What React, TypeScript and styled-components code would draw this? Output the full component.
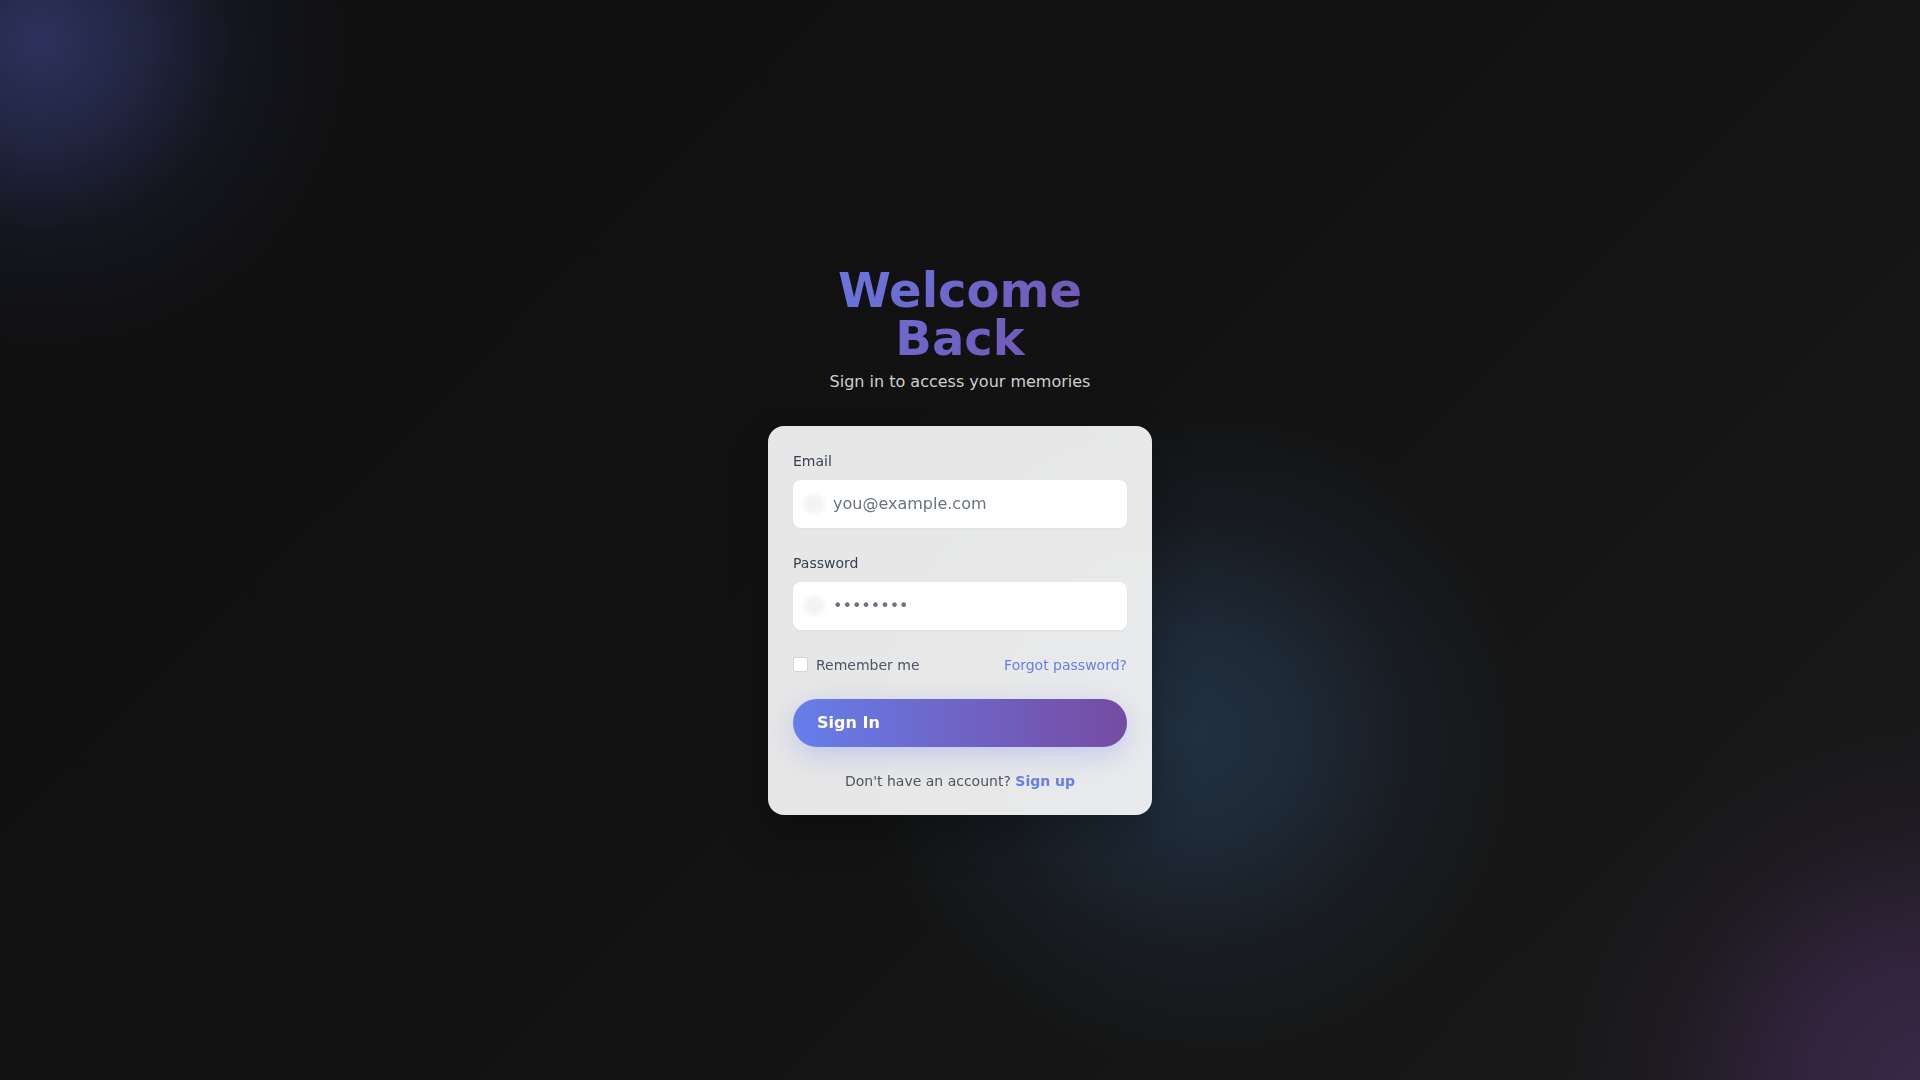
import React from 'react'
import styled, { createGlobalStyle } from 'styled-components'

const GlobalStyle = createGlobalStyle`
    * {
        box-sizing: border-box;
    }
    body {
        margin: 0;
        background: #111111;
        font-family: "DejaVu Sans", Verdana, sans-serif;
    }
`

const Page = styled.div`
    min-height: 100vh;
    display: flex;
    align-items: center;
    justify-content: center;
    background:
        radial-gradient(circle 320px at 40px 40px, rgba(44, 50, 92, 1) 0%, rgba(40, 46, 84, 0.75) 30%, rgba(30, 34, 60, 0.35) 60%, rgba(17, 17, 17, 0) 100%),
        radial-gradient(circle 330px at 1195px 735px, rgba(33, 47, 63, 1) 0%, rgba(32, 46, 62, 0.85) 30%, rgba(28, 38, 50, 0.45) 65%, rgba(17, 17, 17, 0) 100%),
        radial-gradient(circle 380px at 1930px 1090px, rgba(58, 40, 72, 1) 0%, rgba(54, 38, 68, 0.8) 35%, rgba(40, 32, 50, 0.35) 70%, rgba(17, 17, 17, 0) 100%),
        linear-gradient(135deg, #0f0f0f 0%, #121212 50%, #1a1a1a 100%);
`

const Wrapper = styled.div`
    width: 384px;
    display: flex;
    flex-direction: column;
`

const Header = styled.div`
    text-align: center;
    margin-bottom: 32px;
`

const Title = styled.h1`
    margin: 0;
    font-size: 48px;
    line-height: 1;
    font-weight: 700;
    background: linear-gradient(135deg, #667eea 0%, #764ba2 100%);
    -webkit-background-clip: text;
    background-clip: text;
    color: transparent;
`

const SubTitle = styled.p`
    margin: 8px 0 0;
    font-size: 16px;
    line-height: 24px;
    color: #cfcfcf;
`

const Card = styled.form`
    background: rgba(255, 255, 255, 0.9);
    backdrop-filter: blur(12px);
    border-radius: 16px;
    padding: 25px 25px 24px;
    box-shadow: 0 20px 40px rgba(0, 0, 0, 0.25);
`

const Field = styled.div<{ gap?: string }>`
    margin-bottom: ${props => props.gap || '25px'};
`

const Label = styled.label`
    display: block;
    font-size: 14px;
    line-height: 20px;
    color: #374151;
    margin-bottom: 9px;
`

const InputBox = styled.div`
    position: relative;
`

const IconGhost = styled.span`
    position: absolute;
    left: 10px;
    top: 14px;
    width: 22px;
    height: 20px;
    border-radius: 50%;
    background: #eeeff1;
    filter: blur(2px);
    opacity: 0.7;
`

const Input = styled.input`
    width: 100%;
    height: 48px;
    border: none;
    border-radius: 8px;
    background: #ffffff;
    padding: 0 16px 0 40px;
    font-family: "DejaVu Sans", Verdana, sans-serif;
    font-size: 16px;
    color: #374151;
    box-shadow: 0 1px 3px rgba(0, 0, 0, 0.04);
    outline: none;
    &::placeholder {
        color: #6b7280;
    }
`

const OptionsRow = styled.div`
    display: flex;
    align-items: center;
    justify-content: space-between;
    height: 20px;
    margin-bottom: 24px;
`

const Remember = styled.label`
    display: flex;
    align-items: center;
    gap: 8px;
    font-size: 14px;
    color: #4b5563;
`

const CheckBox = styled.input`
    appearance: none;
    margin: 0;
    width: 15px;
    height: 15px;
    border: 1px solid #d1d5db;
    border-radius: 3px;
    background: #ffffff;
`

const LinkText = styled.a<{ bold?: boolean }>`
    font-size: 14px;
    color: #667eea;
    text-decoration: none;
    font-weight: ${props => (props.bold ? 700 : 400)};
`

const SubmitButton = styled.button`
    display: block;
    width: 100%;
    height: 48px;
    border: none;
    border-radius: 9999px;
    padding: 0 24px;
    text-align: left;
    font-family: "DejaVu Sans", Verdana, sans-serif;
    font-size: 16px;
    font-weight: 700;
    color: #ffffff;
    background: linear-gradient(90deg, #667eea 0%, #764ba2 100%);
    box-shadow: 0 8px 28px rgba(102, 126, 234, 0.3);
    margin-bottom: 24px;
`

const Footer = styled.p`
    margin: 0;
    text-align: center;
    font-size: 14px;
    line-height: 20px;
    color: #4b5563;
`

export default function App() {
    return (
        <>
            <GlobalStyle />
            <Page>
                <Wrapper>
                    <Header>
                        <Title>Welcome Back</Title>
                        <SubTitle>Sign in to access your memories</SubTitle>
                    </Header>
                    <Card onSubmit={e => e.preventDefault()}>
                        <Field>
                            <Label htmlFor="email">Email</Label>
                            <InputBox>
                                <IconGhost />
                                <Input id="email" type="email" placeholder="you@example.com" />
                            </InputBox>
                        </Field>
                        <Field gap="25px">
                            <Label htmlFor="password">Password</Label>
                            <InputBox>
                                <IconGhost />
                                <Input id="password" type="password" placeholder="••••••••" />
                            </InputBox>
                        </Field>
                        <OptionsRow>
                            <Remember>
                                <CheckBox type="checkbox" />
                                Remember me
                            </Remember>
                            <LinkText href="#">Forgot password?</LinkText>
                        </OptionsRow>
                        <SubmitButton type="submit">Sign In</SubmitButton>
                        <Footer>
                            Don't have an account? <LinkText href="#" bold>Sign up</LinkText>
                        </Footer>
                    </Card>
                </Wrapper>
            </Page>
        </>
    )
}
